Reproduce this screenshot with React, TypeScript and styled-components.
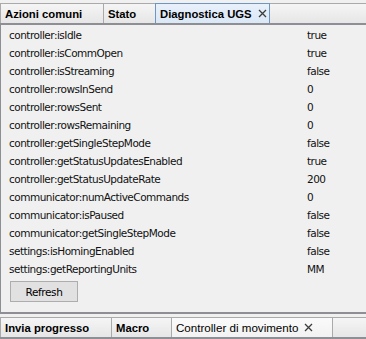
import styled, { createGlobalStyle } from "styled-components"

const Global = createGlobalStyle`
  html, body {
    margin: 0;
    padding: 0;
    background: #f0f0f0;
  }
  body {
    font-family: "DejaVu Sans", "Liberation Sans", sans-serif;
    font-size: 11px;
    color: #000;
  }
`

const Frame = styled.div`
  width: 366px;
  height: 339px;
  display: flex;
  flex-direction: column;
  overflow: hidden;
  background: #f0f0f0;
`

const TabBar = styled.div<{ $bottom?: boolean }>`
  display: flex;
  align-items: flex-end;
  height: 20px;
  margin-top: ${(p) => (p.$bottom ? "2px" : "3px")};
  border-bottom: 2px solid #8e8f94;
  flex-shrink: 0;
`

const Tab = styled.div<{ $selected?: boolean; $width: number; $plain?: boolean }>`
  width: ${(p) => p.$width}px;
  height: 20px;
  box-sizing: border-box;
  display: flex;
  align-items: center;
  gap: 6px;
  padding-left: 4px;
  border: 1px solid ${(p) => (p.$selected && !p.$plain ? "#6f95c1" : "#aaaaaa")};
  border-bottom: none;
  margin-right: -1px;
  background: ${(p) =>
    p.$selected
      ? p.$plain
        ? "linear-gradient(#fafafa, #f2f2f2)"
        : "linear-gradient(#e8f1fb, #dae7f6)"
      : "linear-gradient(#f5f5f5, #e6e6e6)"};
  font-family: "Liberation Sans", Arial, sans-serif;
  font-weight: ${(p) => (p.$plain ? "normal" : "bold")};
  font-size: ${(p) => (p.$plain ? "11.6px" : "11.3px")};
  white-space: nowrap;
  position: relative;
  z-index: ${(p) => (p.$selected ? 1 : 0)};
`

const Filler = styled.div`
  flex: 1;
  height: 20px;
  box-sizing: border-box;
  border-top: 1px solid #aaaaaa;
  border-left: 1px solid #aaaaaa;
  background: linear-gradient(#f5f5f5, #e6e6e6);
`

const Close = styled.svg`
  width: 9px;
  height: 9px;
  flex-shrink: 0;
`

const CloseIcon = () => (
  <Close viewBox="0 0 9 9">
    <path d="M1 1L8 8M8 1L1 8" stroke="#3c3c3c" strokeWidth="1.3" fill="none" />
  </Close>
)

const Body = styled.div`
  flex: 1;
  display: flex;
  flex-direction: column;
  padding: 1px 0 0 8px;
  border-left: 1px solid #8e8f94;
  border-bottom: 2px solid #8e8f94;
  margin-bottom: 1px;
`

const Row = styled.div`
  display: grid;
  grid-template-columns: 298px 1fr;
  height: 18px;
  align-items: center;
  font-family: "DejaVu Sans", sans-serif;
  font-size: 10.5px;
  letter-spacing: -0.5px;
  color: #111;
`

const Button = styled.button`
  margin-top: 3px;
  margin-left: 1px;
  width: 68px;
  height: 21px;
  border: 1px solid #adadad;
  background: #e1e1e1;
  font-family: "DejaVu Sans", sans-serif;
  font-size: 10.5px;
  letter-spacing: -0.4px;
  color: #000;
  padding: 0;
`

const rows: [string, string][] = [
  ["controller:isIdle", "true"],
  ["controller:isCommOpen", "true"],
  ["controller:isStreaming", "false"],
  ["controller:rowsInSend", "0"],
  ["controller:rowsSent", "0"],
  ["controller:rowsRemaining", "0"],
  ["controller:getSingleStepMode", "false"],
  ["controller:getStatusUpdatesEnabled", "true"],
  ["controller:getStatusUpdateRate", "200"],
  ["communicator:numActiveCommands", "0"],
  ["communicator:isPaused", "false"],
  ["communicator:getSingleStepMode", "false"],
  ["settings:isHomingEnabled", "false"],
  ["settings:getReportingUnits", "MM"],
]

const App = () => {
  return (
    <>
      <Global />
      <Frame>
        <TabBar>
          <Tab $width={104}>Azioni comuni</Tab>
          <Tab $width={53}>Stato</Tab>
          <Tab $width={115} $selected>
            Diagnostica UGS <CloseIcon />
          </Tab>
          <Filler />
        </TabBar>
        <Body>
          {rows.map(([k, v], i) => (
            <Row key={i}>
              <span>{k}</span>
              <span>{v}</span>
            </Row>
          ))}
          <Button>Refresh</Button>
        </Body>
        <TabBar $bottom>
          <Tab $width={112}>Invia progresso</Tab>
          <Tab $width={61}>Macro</Tab>
          <Tab $width={162} $selected $plain>
            Controller di movimento <CloseIcon />
          </Tab>
          <Filler />
        </TabBar>
      </Frame>
    </>
  )
}

export default App
